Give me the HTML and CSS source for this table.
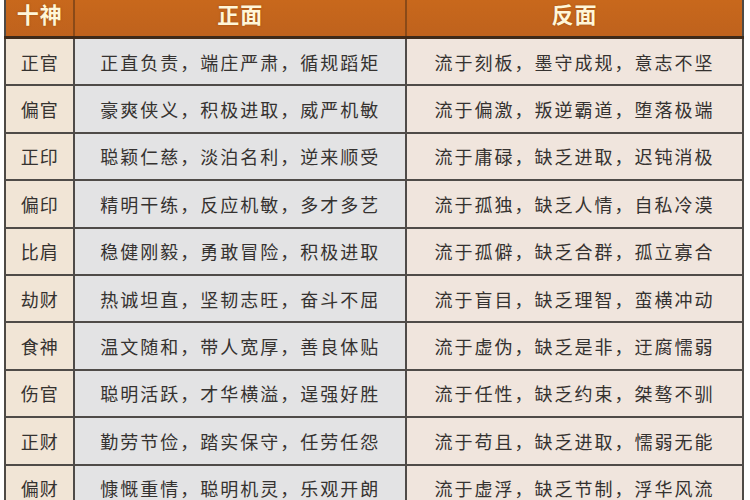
FILE: index.html
```
<!DOCTYPE html>
<html lang="zh">
<head>
<meta charset="utf-8">
<link rel="stylesheet" href="styles.css">
</head>
<body>
<table class="shishen">
  <thead>
    <tr><th class="c1">十神</th><th class="c2">正面</th><th class="c3">反面</th></tr>
  </thead>
  <tbody>
    <tr><td class="c1">正官</td><td class="c2">正直负责，端庄严肃，循规蹈矩</td><td class="c3">流于刻板，墨守成规，意志不坚</td></tr>
    <tr><td class="c1">偏官</td><td class="c2">豪爽侠义，积极进取，威严机敏</td><td class="c3">流于偏激，叛逆霸道，堕落极端</td></tr>
    <tr><td class="c1">正印</td><td class="c2">聪颖仁慈，淡泊名利，逆来顺受</td><td class="c3">流于庸碌，缺乏进取，迟钝消极</td></tr>
    <tr><td class="c1">偏印</td><td class="c2">精明干练，反应机敏，多才多艺</td><td class="c3">流于孤独，缺乏人情，自私冷漠</td></tr>
    <tr><td class="c1">比肩</td><td class="c2">稳健刚毅，勇敢冒险，积极进取</td><td class="c3">流于孤僻，缺乏合群，孤立寡合</td></tr>
    <tr><td class="c1">劫财</td><td class="c2">热诚坦直，坚韧志旺，奋斗不屈</td><td class="c3">流于盲目，缺乏理智，蛮横冲动</td></tr>
    <tr><td class="c1">食神</td><td class="c2">温文随和，带人宽厚，善良体贴</td><td class="c3">流于虚伪，缺乏是非，迂腐懦弱</td></tr>
    <tr><td class="c1">伤官</td><td class="c2">聪明活跃，才华横溢，逞强好胜</td><td class="c3">流于任性，缺乏约束，桀骜不驯</td></tr>
    <tr><td class="c1">正财</td><td class="c2">勤劳节俭，踏实保守，任劳任怨</td><td class="c3">流于苟且，缺乏进取，懦弱无能</td></tr>
    <tr><td class="c1">偏财</td><td class="c2">慷慨重情，聪明机灵，乐观开朗</td><td class="c3">流于虚浮，缺乏节制，浮华风流</td></tr>
  </tbody>
</table>
</body>
</html>
```
FILE: styles.css
```
html, body {
  margin: 0;
  padding: 0;
  background: #ffffff;
  overflow: hidden;
}
body {
  padding-left: 4px;
  font-family: "Noto Sans CJK SC", "Noto Sans", sans-serif;
}
.shishen {
  border-collapse: collapse;
  table-layout: fixed;
  width: 740px;
  border-left: 2px solid #4e4a46;
  border-right: 2px solid #4e4a46;
}
.shishen th {
  height: 36px;
  padding: 0 0 9px 0;
  box-sizing: border-box;
  background: linear-gradient(#c8681c, #bf621d);
  color: #fff6d8;
  font-size: 22px;
  line-height: 27px;
  font-weight: 700;
  letter-spacing: 1px;
  vertical-align: top;
  border-bottom: 3px solid #3e2a1a;
  text-shadow: 0 0 2px rgba(120, 60, 10, 0.6);
}
.shishen th.c1 { border-right: 2px solid #8a4a18; }
.shishen th.c2 { border-right: 2px solid #8a4a18; }
.shishen td {
  height: 45.4px;
  padding: 0;
  box-sizing: content-box;
  border-bottom: 2px solid #4f4b48;
  color: #353230;
  font-size: 18px;
  line-height: 24px;
  letter-spacing: 2px;
  text-align: center;
  vertical-align: middle;
  white-space: nowrap;
}
.c1 { width: 69px; }
.c2 { width: 330px; }
.c3 { width: 335px; }
td.c1 {
  background: #f1e5d6;
  border-right: 2px solid #4f4b48;
  letter-spacing: 1px;
}
td.c2 {
  background: #e3e3e4;
  border-right: 2px solid #4f4b48;
}
td.c3 {
  background: #f0e5dd;
}
```
